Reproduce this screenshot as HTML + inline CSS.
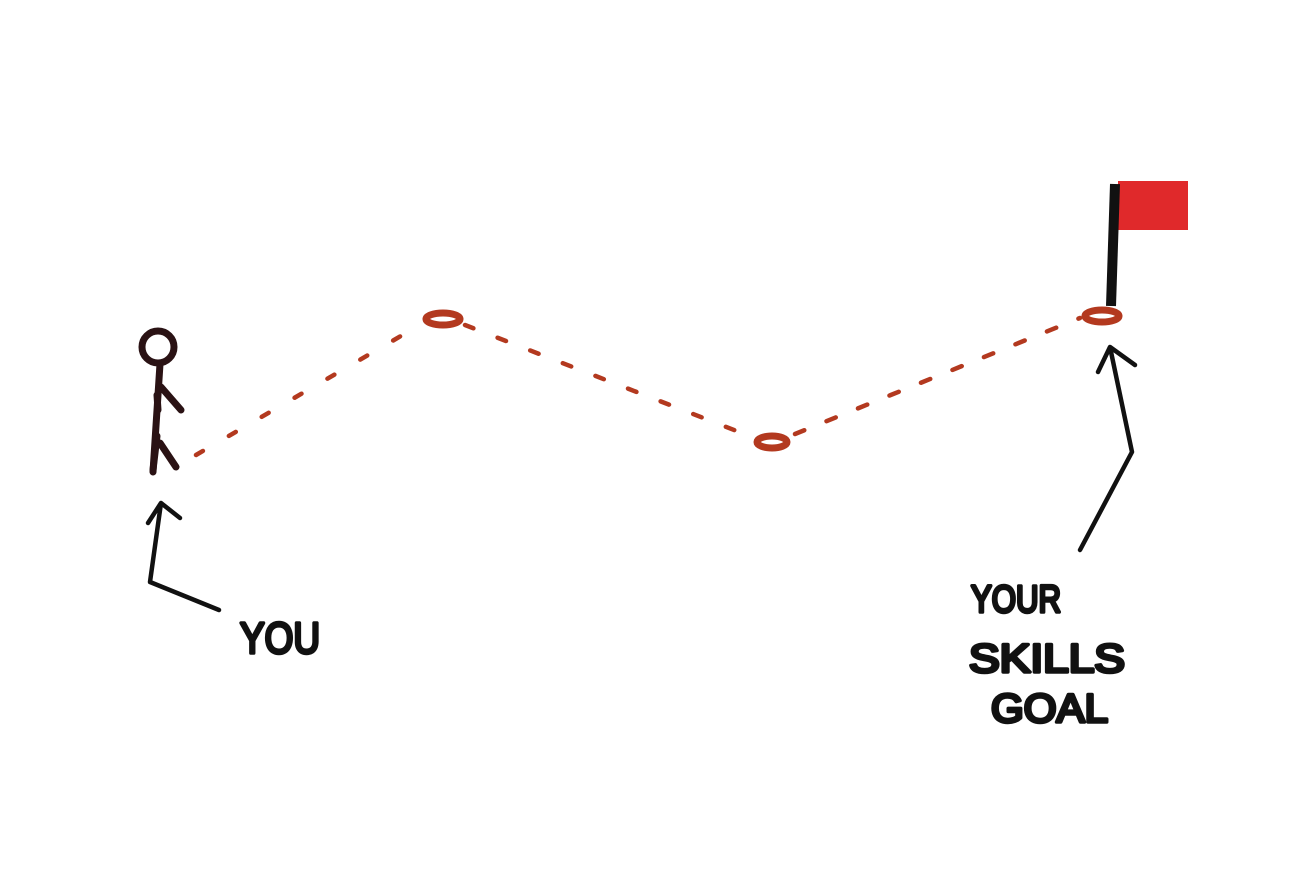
<!DOCTYPE html>
<html><head><meta charset="utf-8"><style>
html,body{margin:0;padding:0;background:#fff;width:1290px;height:877px;overflow:hidden}
svg{display:block}
text{font-family:"Liberation Sans",sans-serif;font-weight:normal;fill:#111;stroke:#111;stroke-width:3.5;stroke-linejoin:round}
</style></head><body>
<svg width="1290" height="877" viewBox="0 0 1290 877">
<g fill="none" stroke="#b3391f" stroke-linecap="round">
<path d="M196 455 L425 322" stroke-width="4.5" stroke-dasharray="8 30"/>
<path d="M465 325 L752 437" stroke-width="4.5" stroke-dasharray="9 26"/>
<path d="M795 434 L1080 318" stroke-width="4.5" stroke-dasharray="10 24"/>
<ellipse cx="443" cy="319" rx="17" ry="6" stroke-width="7"/>
<ellipse cx="772" cy="442" rx="15" ry="6" stroke-width="7"/>
<ellipse cx="1102" cy="316" rx="17" ry="6" stroke-width="7"/>
</g>
<rect x="1118" y="181" width="70" height="49" fill="#e0292b"/>
<path d="M1115 184 L1111 306" stroke="#111" stroke-width="10" fill="none"/>
<g fill="none" stroke="#2a1214" stroke-width="7" stroke-linecap="round" stroke-linejoin="round">
<circle cx="158" cy="347" r="16"/>
<path d="M160 364 L153 472"/>
<path d="M161 387 L181 410 M157 395 L158 410"/>
<path d="M160 443 L176 467 M157 436 L153 470"/>
</g>
<g fill="none" stroke="#111" stroke-width="4.5" stroke-linecap="round" stroke-linejoin="round">
<path d="M148 523 L161 503 L180 518 M161 503 L150 582 L219 610"/>
<path d="M1098 372 L1110 347 L1135 365 M1110 347 L1132 452 L1080 550"/>
</g>
<text x="240" y="653" font-size="44" textLength="80" lengthAdjust="spacingAndGlyphs">YOU</text>
<text x="971" y="612" font-size="38" textLength="90" lengthAdjust="spacingAndGlyphs">YOUR</text>
<text x="969" y="672" font-size="40" textLength="156" lengthAdjust="spacingAndGlyphs">SKILLS</text>
<text x="991" y="722" font-size="40" textLength="117" lengthAdjust="spacingAndGlyphs">GOAL</text>
</svg>
</body></html>
